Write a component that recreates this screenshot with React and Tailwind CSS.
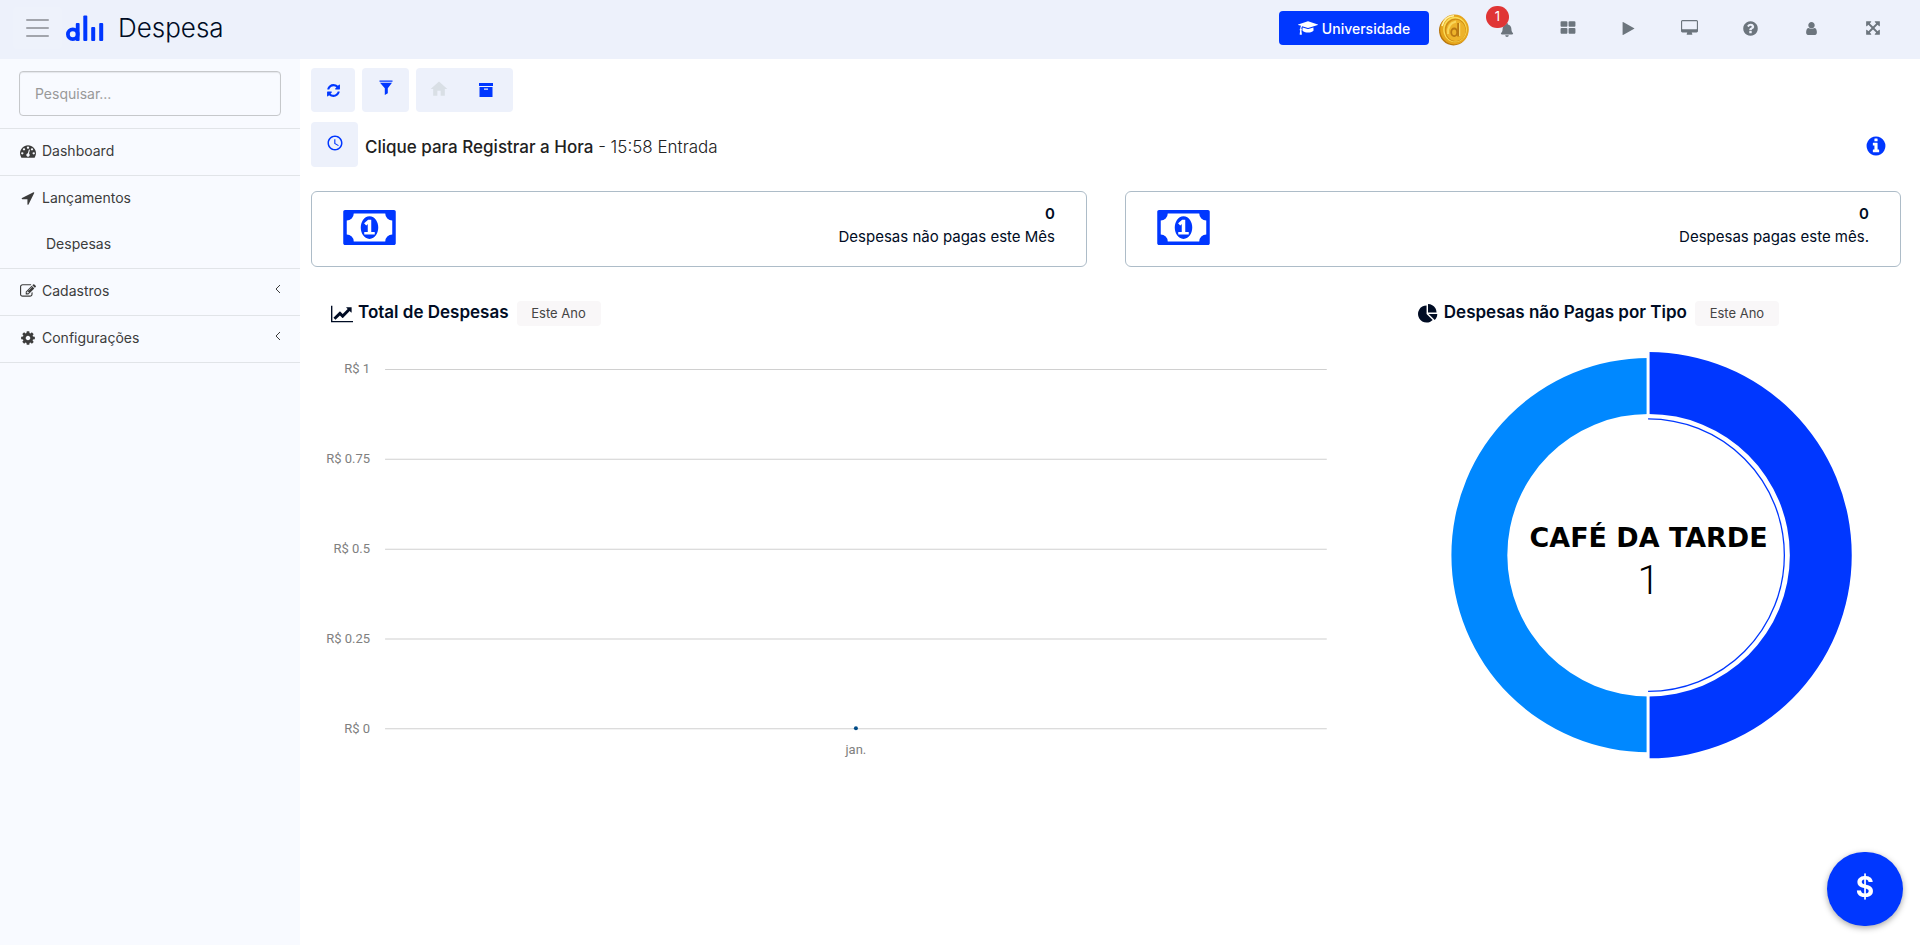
import React from "react";
import { FaBell } from "react-icons/fa";
import { MdHome, MdAccessTime } from "react-icons/md";

const CIRCLE =
  "M1664 896q0 209-103 385.5t-279.5 279.5-385.5 103-385.5-103-279.5-279.5-103-385.5 103-385.5 279.5-279.5 385.5-103 385.5 103 279.5 279.5 103 385.5z";

const ICONS = {
  play: [1792, "M1576 927l-1328 738q-23 13-39.5 3t-16.5-36v-1472q0-26 16.5-36t39.5 3l1328 738q23 13 23 31t-23 31z"],
  refresh: [1792, "M1639 1056q0 5-1 7-64 268-268 434.5t-478 166.5q-146 0-282.5-55t-243.5-157l-129 129q-19 19-45 19t-45-19-19-45v-448q0-26 19-45t45-19h448q26 0 45 19t19 45-19 45l-137 137q71 66 161 102t187 36q134 0 250-65t186-179q11-17 53-117 8-23 30-23h192q13 0 22.5 9.5t9.5 22.5zm25-800v448q0 26-19 45t-45 19h-448q-26 0-45-19t-19-45 19-45l138-138q-148-137-349-137-134 0-250 65t-186 179q-11 17-53 117-8 23-30 23h-199q-13 0-22.5-9.5t-9.5-22.5v-7q65-268 270-434.5t480-166.5q146 0 284 55.5t245 156.5l130-129q19-19 45-19t45 19 19 45z"],
  user: [1792, "M1536 1399q0 109-62.5 187t-150.5 78h-854q-88 0-150.5-78t-62.5-187q0-85 8.5-160.5t31.5-152 58.5-131 94-89 134.5-34.5q131 128 313 128t313-128q76 0 134.5 34.5t94 89 58.5 131 31.5 152 8.5 160.5zm-256-887q0 159-112.5 271.5t-271.5 112.5-271.5-112.5-112.5-271.5 112.5-271.5 271.5-112.5 271.5 112.5 112.5 271.5z"],
  desktop: [1920, "M1792 992v-832q0-13-9.5-22.5t-22.5-9.5h-1600q-13 0-22.5 9.5t-9.5 22.5v832q0 13 9.5 22.5t22.5 9.5h1600q13 0 22.5-9.5t9.5-22.5zm128-832v1088q0 66-47 113t-113 47h-544q0 37 16 77.5t32 71 16 43.5q0 26-19 45t-45 19h-512q-26 0-45-19t-19-45q0-14 16-44t32-70 16-78h-544q-66 0-113-47t-47-113v-1088q0-66 47-113t113-47h1600q66 0 113 47t47 113z"],
  help: [1792, "M1024 1376v-192q0-14-9-23t-23-9h-192q-14 0-23 9t-9 23v192q0 14 9 23t23 9h192q14 0 23-9t9-23zm256-672q0-88-55.5-163t-138.5-116-170-41q-243 0-371 213-15 24 8 42l132 100q7 6 19 6 16 0 25-12 53-68 86-92 34-24 86-24 48 0 85.5 26t37.5 59q0 38-20 61t-68 45q-63 28-115.5 86.5t-52.5 125.5v36q0 14 9 23t23 9h192q14 0 23-9t9-23q0-19 21.5-49.5t54.5-49.5q32-18 49-28.5t46-35 44.5-48 28-60.5 12.5-81z" + CIRCLE],
  info: [1792, "M1152 1376v-160q0-14-9-23t-23-9h-96v-512q0-14-9-23t-23-9h-320q-14 0-23 9t-9 23v160q0 14 9 23t23 9h96v320h-96q-14 0-23 9t-9 23v160q0 14 9 23t23 9h448q14 0 23-9t9-23zm-128-896v-160q0-14-9-23t-23-9h-192q-14 0-23 9t-9 23v160q0 14 9 23t23 9h192q14 0 23-9t9-23z" + CIRCLE],
  location: [1792, "M1593 349l-640 1280q-17 35-57 35-5 0-15-2-22-5-35.5-22.5t-13.5-39.5v-576h-576q-22 0-39.5-13.5t-22.5-35.5 4-42 29-30l1280-640q13-7 29-7 27 0 45 19 15 14 18.5 34.5t-6.5 39.5z"],
  expand: [1792, "M1411 541l-355 355 355 355 144-144q29-31 70-14 39 17 39 59v448q0 26-19 45t-45 19h-448q-42 0-59-40-17-39 14-69l144-144-355-355-355 355 144 144q31 30 14 69-17 40-59 40h-448q-26 0-45-19t-19-45v-448q0-42 40-59 39-17 69 14l144 144 355-355-355-355-144 144q-19 19-45 19-12 0-24-5-40-17-40-59v-448q0-26 19-45t45-19h448q42 0 59 40 17 39-14 69l-144 144 355 355 355-355-144-144q-31-30-14-69 17-40 59-40h448q26 0 45 19t19 45v448q0 42-39 59-13 5-25 5-26 0-45-19z"],
  cog: [1792, "M1152 896q0-106-75-181t-181-75-181 75-75 181 75 181 181 75 181-75 75-181zm512-109v222q0 12-8 23t-20 13l-185 28q-19 54-39 91 35 50 107 138 10 12 10 25t-9 23q-27 37-99 108t-94 71q-12 0-26-9l-138-108q-44 23-91 38-16 136-29 186-7 28-36 28h-222q-14 0-24.5-8.5t-11.5-21.5l-28-184q-49-16-90-37l-141 107q-10 9-25 9-14 0-25-11-126-114-165-168-7-10-7-23 0-12 8-23 15-21 51-66.5t54-70.5q-27-50-41-99l-183-27q-13-2-21-12.5t-8-23.5v-222q0-12 8-23t19-13l186-28q14-46 39-92-40-57-107-138-10-12-10-24 0-10 9-23 26-36 98.5-107.5t94.5-71.5q13 0 26 10l138 107q44-23 91-38 16-136 29-186 7-28 36-28h222q14 0 24.5 8.5t11.5 21.5l28 184q49 16 90 37l142-107q9-9 24-9 13 0 25 10 129 119 165 170 7 8 7 22 0 12-8 23-15 21-51 66.5t-54 70.5q26 50 41 98l183 28q13 2 21 12.5t8 23.5z"],
  gauge: [1792, "M384 1152q0-53-37.5-90.5t-90.5-37.5-90.5 37.5-37.5 90.5 37.5 90.5 90.5 37.5 90.5-37.5 37.5-90.5zm192-448q0-53-37.5-90.5t-90.5-37.5-90.5 37.5-37.5 90.5 37.5 90.5 90.5 37.5 90.5-37.5 37.5-90.5zm428 481l101-382q6-26-7.5-48.5t-38.5-29.5-48 6.5-30 39.5l-101 382q-60 5-107 43.5t-63 98.5q-20 77 20 146t117 89 146-20 89-117q16-60-6-117t-72-91zm660-33q0-53-37.5-90.5t-90.5-37.5-90.5 37.5-37.5 90.5 37.5 90.5 90.5 37.5 90.5-37.5 37.5-90.5zm-640-640q0-53-37.5-90.5t-90.5-37.5-90.5 37.5-37.5 90.5 37.5 90.5 90.5 37.5 90.5-37.5 37.5-90.5zm448 192q0-53-37.5-90.5t-90.5-37.5-90.5 37.5-37.5 90.5 37.5 90.5 90.5 37.5 90.5-37.5 37.5-90.5zm320 448q0 261-141 483-19 29-54 29h-1402q-35 0-54-29-141-221-141-483 0-182 71-348t191-286 286-191 348-71 348 71 286 191 191 286 71 348z"],
  edit: [1792, "M888 1184l116-116-152-152-116 116v56h96v96h56zm440-720q-16-16-33 1l-350 350q-17 17-1 33t33-1l350-350q17-17 1-33zm80 594v190q0 119-84.5 203.5t-203.5 84.5h-832q-119 0-203.5-84.5t-84.5-203.5v-832q0-119 84.5-203.5t203.5-84.5h832q63 0 117 25 15 7 18 23 3 17-9 29l-49 49q-14 14-32 8-23-6-45-6h-832q-66 0-113 47t-47 113v832q0 66 47 113t113 47h832q66 0 113-47t47-113v-126q0-13 9-22l64-64q15-15 35-7t20 29zm-96-738l288 288-672 672h-288v-288zm444 132l-92 92-288-288 92-92q28-28 68-28t68 28l152 152q28 28 28 68t-28 68z"],
  line: [2048, "M2048 1536v128h-2048v-1536h128v1408h1920zm-128-1248v435q0 21-19.5 29.5t-35.5-7.5l-121-121-633 633q-10 10-23 10t-23-10l-233-233-416 416-192-192 585-585q10-10 23-10t23 10l233 233 464-464-121-121q-16-16-7.5-35.5t29.5-19.5h435q14 0 23 9t9 23z"],
  pie: [1792, "M768 890l546 546q-106 108-247.5 168t-298.5 60q-209 0-385.5-103t-279.5-279.5-103-385.5 103-385.5 279.5-279.5 385.5-103v762zm187 6h773q0 157-60 298.5t-168 247.5zm709-128h-768v-768q209 0 385.5 103t279.5 279.5 103 385.5z"],
  grid: [1792, "M832 1024v384q0 52-38 90t-90 38h-512q-52 0-90-38t-38-90v-384q0-52 38-90t90-38h512q52 0 90 38t38 90zm0-768v384q0 52-38 90t-90 38h-512q-52 0-90-38t-38-90v-384q0-52 38-90t90-38h512q52 0 90 38t38 90zm896 768v384q0 52-38 90t-90 38h-512q-52 0-90-38t-38-90v-384q0-52 38-90t90-38h512q52 0 90 38t38 90zm0-768v384q0 52-38 90t-90 38h-512q-52 0-90-38t-38-90v-384q0-52 38-90t90-38h512q52 0 90 38t38 90z"],
  cap: [2304, "M1774 836l18 316q4 69-82 128t-235 93.5-323 34.5-323-34.5-235-93.5-82-128l18-316 574 181q22 7 48 7t48-7zm530-324q0 23-22 31l-1120 352q-4 1-10 1t-10-1l-652-206q-43 34-71 111.5t-34 178.5q63 36 63 109 0 69-58 107l58 433q2 14-8 25-9 11-24 11h-192q-15 0-24-11-10-11-8-25l58-433q-58-38-58-107 0-73 65-111 11-207 98-330l-333-104q-22-8-22-31t22-31l1120-352q4-1 10-1t10 1l1120 352q22 8 22 31z"],
  money: [1920, "M768 1152h384v-96h-128v-448h-114l-148 137 77 80q42-37 55-57h2v288h-128v96zm512-256q0 70-21 142t-59.5 134-101.5 101-138 39-138-39-101.5-101-59.5-134-21-142 21-142 59.5-134 101.5-101 138-39 138 39 101.5 101 59.5 134 21 142zm512 256v-512q-106 0-181-75t-75-181h-1152q0 106-75 181t-181 75v512q106 0 181 75t75 181h1152q0-106 75-181t181-75zm128-832v1152q0 26-19 45t-45 19h-1792q-26 0-45-19t-19-45v-1152q0-26 19-45t45-19h1792q26 0 45 19t19 45z"],
};

function Icon({ name, className }) {
  const [width, d] = ICONS[name];
  return (
    <svg viewBox={`0 0 ${width} 1792`} fill="currentColor" fillRule="evenodd" aria-hidden="true" className={className}>
      <path d={d} />
    </svg>
  );
}

function Logo() {
  return (
    <svg viewBox="0 0 38 28" className="h-7 w-[38px]" fill="#0037ff" role="img" aria-label="Logo">
      <circle cx="6.8" cy="20.2" r="4.9" fill="none" stroke="#0037ff" strokeWidth="3.8" />
      <rect x="9.8" y="9" width="3.8" height="18" rx="1" />
      <rect x="17.3" y="1.500" width="4" height="25.500" rx="1" />
      <rect x="25.2" y="13" width="4" height="14" rx="1" />
      <rect x="33.2" y="9" width="4" height="18" rx="1" />
    </svg>
  );
}

function Coin() {
  return (
    <svg viewBox="0 0 30 32" className="h-8 w-[30px]" aria-hidden="true">
      <ellipse cx="14.5" cy="16.5" rx="14.5" ry="15" fill="#b9770e" />
      <ellipse cx="15.5" cy="15.5" rx="14.3" ry="15" fill="#e5a51c" />
      <ellipse cx="16" cy="15.5" rx="11.8" ry="12.8" fill="#fbdc57" />
      <ellipse cx="16.3" cy="16" rx="10.6" ry="11.6" fill="#cf8d14" />
      <ellipse cx="16.8" cy="16.5" rx="9.8" ry="10.7" fill="#edb32a" />
      <path d="M3 12Q6 2 15 1.800" stroke="#fff0a0" strokeWidth="1.600" fill="none" />
      <path d="M9 20Q8 10 17 7.500" stroke="#f9d65a" strokeWidth="2" fill="none" />
      <ellipse cx="15.200" cy="18.300" rx="3" ry="3.800" fill="none" stroke="#b97812" strokeWidth="1.800" />
      <path d="M19.200 9v13.500" stroke="#b97812" strokeWidth="2" />
      <path d="M20.700 9v13" stroke="#fbe27a" strokeWidth="1" />
    </svg>
  );
}

function HeaderButton({ label, children }) {
  return (
    <button type="button" aria-label={label} className="relative flex h-11 w-[61px] items-center justify-center text-[#6c757d]">
      {children}
    </button>
  );
}

function Header() {
  return (
    <header className="flex h-[59px] items-center bg-[#edf1fb] pr-[17px] pb-[3px] pl-[13px]">
      <button type="button" aria-label="Menu" className="flex h-[42px] w-[49px] flex-col items-center justify-center gap-[6px] rounded bg-[#eef2fb]">
        <span className="h-[2px] w-[23px] rounded bg-[#a2a5ac]" />
        <span className="h-[2px] w-[23px] rounded bg-[#a2a5ac]" />
        <span className="h-[2px] w-[23px] rounded bg-[#a2a5ac]" />
      </button>
      <a href="#inicio" className="ml-1 flex items-center gap-[14px]">
        <Logo />
        <h1 className="text-[26px] leading-8 font-light text-[#000c24]">Despesa</h1>
      </a>
      <div className="ml-auto flex items-center">
        <button type="button" className="flex h-[34px] w-[150px] items-center justify-center gap-1 rounded bg-[#0037ff] text-[14px] font-medium text-white">
          <Icon name="cap" className="h-4 w-5" />
          Universidade
        </button>
        <button type="button" aria-label="Moedas" className="mr-[7px] ml-[10px] pt-1">
          <Coin />
        </button>
        <HeaderButton label="Notificações">
          <FaBell className="mt-1 size-[14px]" />
          <span className="absolute top-0 left-[10px] flex h-[22px] w-[23px] items-center justify-center rounded-full bg-[#e03535] text-[13px] text-white">
            1
          </span>
        </HeaderButton>
        <HeaderButton label="Aplicativos"><Icon name="grid" className="size-4" /></HeaderButton>
        <HeaderButton label="Vídeos"><Icon name="play" className="size-[15px]" /></HeaderButton>
        <HeaderButton label="Tela"><Icon name="desktop" className="h-4 w-[17px]" /></HeaderButton>
        <HeaderButton label="Ajuda"><Icon name="help" className="size-[17px]" /></HeaderButton>
        <HeaderButton label="Usuário"><Icon name="user" className="size-[15px]" /></HeaderButton>
        <HeaderButton label="Tela cheia"><Icon name="expand" className="size-4" /></HeaderButton>
      </div>
    </header>
  );
}

function NavItem({ icon, label, chevron }) {
  return (
    <a href="#menu" className="flex h-[46px] items-center pr-[19px] pb-[3px] pl-5">
      <Icon name={icon} className="mr-[6px] size-4" />
      <span>{label}</span>
      {chevron && (
        <svg viewBox="0 0 6 10" className="mb-1 ml-auto h-[10px] w-[6px]" fill="none" stroke="currentColor" aria-hidden="true">
          <path d="M5 1L1 5l4 4" />
        </svg>
      )}
    </a>
  );
}

function Sidebar() {
  return (
    <aside className="w-[300px] shrink-0 bg-[#f8faff]">
      <div className="px-[19px] py-3">
        <input
          type="search"
          aria-label="Pesquisar"
          placeholder="Pesquisar..."
          className="h-[45px] w-full rounded border border-[#c6c8cb] bg-transparent px-[15px] text-sm shadow-[inset_0_1px_1px_rgba(0,0,0,0.08)] outline-none placeholder:text-[#999999]"
        />
      </div>
      <nav className="text-[14px] text-[#3c3c3c]">
        <ul className="divide-y divide-[#e1e4e8] border-y border-[#e1e4e8]">
          <li><NavItem icon="gauge" label="Dashboard" /></li>
          <li>
            <NavItem icon="location" label="Lançamentos" />
            <a href="#despesas" className="flex h-[46px] items-center pb-[3px] pl-[46px]">Despesas</a>
          </li>
          <li><NavItem icon="edit" label="Cadastros" chevron /></li>
          <li><NavItem icon="cog" label="Configurações" chevron /></li>
        </ul>
      </nav>
    </aside>
  );
}

function Toolbar() {
  const tool = "flex h-11 items-center justify-center rounded bg-[#edf1fb] text-[#0037ff]";
  return (
    <div className="flex gap-[7px]">
      <button type="button" aria-label="Atualizar" className={`${tool} w-11`}>
        <Icon name="refresh" className="size-[15px]" />
      </button>
      <button type="button" aria-label="Filtrar" className={`${tool} w-[47px]`}>
        <svg viewBox="0 0 14 16" className="mb-1 h-4 w-[14px]" fill="currentColor" aria-hidden="true">
          <path d="M.5.5h13v1.2H.5zM1 2.7h12L8.8 8.2v5L5.8 15V8.200z" />
        </svg>
      </button>
      <div className={`${tool} w-[97px]`}>
        <button type="button" aria-label="Início" disabled className="flex h-11 flex-1 items-center justify-center pb-[2px] text-[#d9dfe5]">
          <MdHome className="size-5" />
        </button>
        <button type="button" aria-label="Arquivo" className="flex h-11 flex-1 items-center justify-center pr-1">
          <svg viewBox="0 0 14 14" className="size-[14px]" fill="currentColor" aria-hidden="true">
            <path fillRule="evenodd" d="M0 0h14v3H0zM.5 4h13v10H.5zM5 5.500h4v1.200H5z" />
          </svg>
        </button>
      </div>
    </div>
  );
}

function StatCard({ value, label }) {
  return (
    <section className="flex h-[76px] items-center justify-between rounded-md border border-[#adbcc8] px-[31px] pb-1">
      <Icon name="money" className="h-[49px] w-[53px] text-[#0037ff]" />
      <div className="pb-1 text-right text-[15px] leading-[23px] text-[#000c24]">
        <p className="font-semibold">{value}</p>
        <p>{label}</p>
      </div>
    </section>
  );
}

function ChartTitle({ icon, iconClass, title }) {
  return (
    <div className="flex h-[25px] items-center pl-5 text-[#000c24]">
      <Icon name={icon} className={iconClass} />
      <h2 className="pb-[2px] text-[17px] font-semibold">{title}</h2>
      <button type="button" className="ml-2 h-[25px] w-[84px] rounded-sm bg-[#f9f7f8] text-[13px] text-[#444444]">
        Este Ano
      </button>
    </div>
  );
}

const TICKS = ["R$ 1", "R$ 0.75", "R$ 0.5", "R$ 0.25", "R$ 0"];

function LineChart() {
  return (
    <svg viewBox="0 0 1086 430" className="w-full" role="img" aria-label="Total de Despesas">
      {TICKS.map((tick, i) => (
        <g key={tick}>
          <text x="59" y={33 + i * 90} textAnchor="end" fontSize="13" className="fill-[#808080] font-[Roboto,sans-serif]">
            {tick}
          </text>
          <path d={`M74 ${29.5 + i * 89.75}H1015`} stroke="#d0d0d0" />
        </g>
      ))}
      <circle cx="544.5" cy="388" r="2" fill="#004b87" />
      <text x="544.5" y="414" textAnchor="middle" fontSize="13" className="fill-[#808080] font-[Roboto,sans-serif]">
        jan.
      </text>
    </svg>
  );
}

function DonutChart() {
  return (
    <svg viewBox="0 0 504 430" className="w-full" role="img" aria-label="Despesas não Pagas por Tipo">
      <path d="M251 18A197.500 197.500 0 0 0 251 413V357A141.500 141.500 0 0 1 251 74Z" fill="#0088ff" />
      <path d="M251 12A203.500 203.500 0 0 1 251 419V357A141.500 141.500 0 0 0 251 74Z" fill="#0037ff" />
      <path d="M250.500 8V423" stroke="#ffffff" strokeWidth="3" />
      <path d="M250.500 79A136.500 136.500 0 0 1 250.500 352" fill="none" stroke="#0037ff" strokeWidth="1.300" />
      <text x="251" y="207" textAnchor="middle" fontSize="27" fontWeight="700" className="font-[DejaVu_Sans,sans-serif]">
        CAFÉ DA TARDE
      </text>
      <text x="251" y="254" textAnchor="middle" fontSize="40" fontWeight="300" className="font-[Roboto,sans-serif]">
        1
      </text>
    </svg>
  );
}

export default function App() {
  return (
    <div className="flex min-h-screen flex-col bg-white font-[Inter,sans-serif]">
      <Header />
      <div className="flex flex-1">
        <Sidebar />
        <main className="min-w-0 flex-1 pt-[9px] pr-[19px] pl-[11px]">
          <Toolbar />
          <div className="mt-[10px] flex h-[45px] items-center">
            <button type="button" aria-label="Registrar hora" className="flex h-[45px] w-[47px] items-center justify-center rounded bg-[#edf1fb] pb-1 text-[#0037ff]">
              <MdAccessTime className="size-[18px]" />
            </button>
            <p className="mt-[6px] ml-[7px] text-[17px] font-light text-[#212121]">
              <strong className="font-medium">Clique para Registrar a Hora</strong> - 15:58 Entrada
            </p>
            <button type="button" aria-label="Informações" className="mt-[2px] mr-[14px] ml-auto text-[#0037ff]">
              <Icon name="info" className="size-[22px]" />
            </button>
          </div>
          <div className="mt-6 grid grid-cols-2 gap-[38px]">
            <StatCard value="0" label="Despesas não pagas este Mês" />
            <StatCard value="0" label="Despesas pagas este mês." />
          </div>
          <div className="mt-[34px] grid grid-cols-[2.16fr_1fr]">
            <section>
              <ChartTitle icon="line" iconClass="mr-[5px] h-5 w-[22px]" title="Total de Despesas" />
              <div className="pt-[14px]"><LineChart /></div>
            </section>
            <section>
              <ChartTitle icon="pie" iconClass="mr-[6px] h-5 w-5" title="Despesas não Pagas por Tipo" />
              <div className="pt-[14px]"><DonutChart /></div>
            </section>
          </div>
        </main>
      </div>
      <button
        type="button"
        aria-label="Nova despesa"
        className="fixed right-[17px] bottom-[19px] flex h-[74px] w-[76px] items-center justify-center rounded-full bg-[#0037ff] pb-1 text-[28px] font-bold text-white shadow-[0_2px_6px_rgba(0,0,0,0.35)]"
      >
        $
      </button>
    </div>
  );
}
